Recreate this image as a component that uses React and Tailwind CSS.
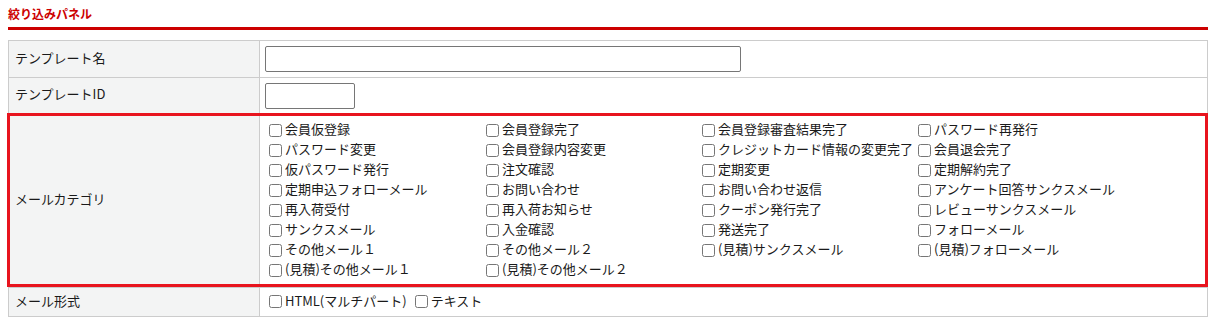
import React from 'react';

const categories = [
  '会員仮登録', '会員登録完了', '会員登録審査結果完了', 'パスワード再発行',
  'パスワード変更', '会員登録内容変更', 'クレジットカード情報の変更完了', '会員退会完了',
  '仮パスワード発行', '注文確認', '定期変更', '定期解約完了',
  '定期申込フォローメール', 'お問い合わせ', 'お問い合わせ返信', 'アンケート回答サンクスメール',
  '再入荷受付', '再入荷お知らせ', 'クーポン発行完了', 'レビューサンクスメール',
  'サンクスメール', '入金確認', '発送完了', 'フォローメール',
  'その他メール１', 'その他メール２', '(見積)サンクスメール', '(見積)フォローメール',
  '(見積)その他メール１', '(見積)その他メール２',
];

function Check({ label }) {
  return (
    <label className="flex items-center gap-[3px] whitespace-nowrap">
      <input type="checkbox" className="m-0 ml-[1px] mt-[2px] w-[13px] h-[13px] shrink-0" />
      <span>{label}</span>
    </label>
  );
}

function Row({ label, className = '', children }) {
  return (
    <div className={`flex border-b border-[#cccccc] ${className}`}>
      <div className="w-[251px] shrink-0 bg-[#f3f4f4] border-r border-[#cccccc] pl-[6px] pb-[3px] flex items-center">
        {label}
      </div>
      <div className="flex-1 pl-[5px] flex items-center">{children}</div>
    </div>
  );
}

export default function App() {
  return (
    <div
      className="bg-white w-[1217px] h-[322px] px-2 pt-[7px] text-[13px] text-[#1a1a1a]"
      style={{ fontFamily: '"Noto Sans CJK JP", "Noto Sans", sans-serif' }}
    >
      <h2 className="text-[12px] font-bold leading-[14px] text-[#cc0000]">絞り込みパネル</h2>
      <div className="mt-[6px] h-[3px] w-[1200px] bg-[#cc0000]" />

      <div className="mt-[10px] w-[1200px] border-t border-l border-r border-[#cccccc]">
        <Row label="テンプレート名" className="h-[37px]">
          <input type="text" className="w-[476px] h-[26px] border border-[#767676] rounded-[2px] bg-white" />
        </Row>
        <Row label="テンプレートID" className="h-[36px]">
          <input type="text" className="w-[90px] h-[26px] border border-[#767676] rounded-[2px] bg-white" />
        </Row>

        <div className="relative">
          <Row label="メールカテゴリ" className="h-[174px]">
            <div className="grid grid-cols-[217px_216px_216px_216px] leading-[20px] pl-[3px] self-start pt-[5px]">
              {categories.map((c) => (
                <Check key={c} label={c} />
              ))}
            </div>
          </Row>
          <div className="absolute -left-[2px] -right-[1px] -top-[1px] bottom-[1px] border-[3px] border-[#e8141e] pointer-events-none" />
        </div>

        <Row label="メール形式" className="h-[29px]">
          <div className="flex items-center gap-[7px] pl-[3px] pb-[3px] leading-[20px]">
            <Check label="HTML(マルチパート)" />
            <Check label="テキスト" />
          </div>
        </Row>
      </div>
    </div>
  );
}
